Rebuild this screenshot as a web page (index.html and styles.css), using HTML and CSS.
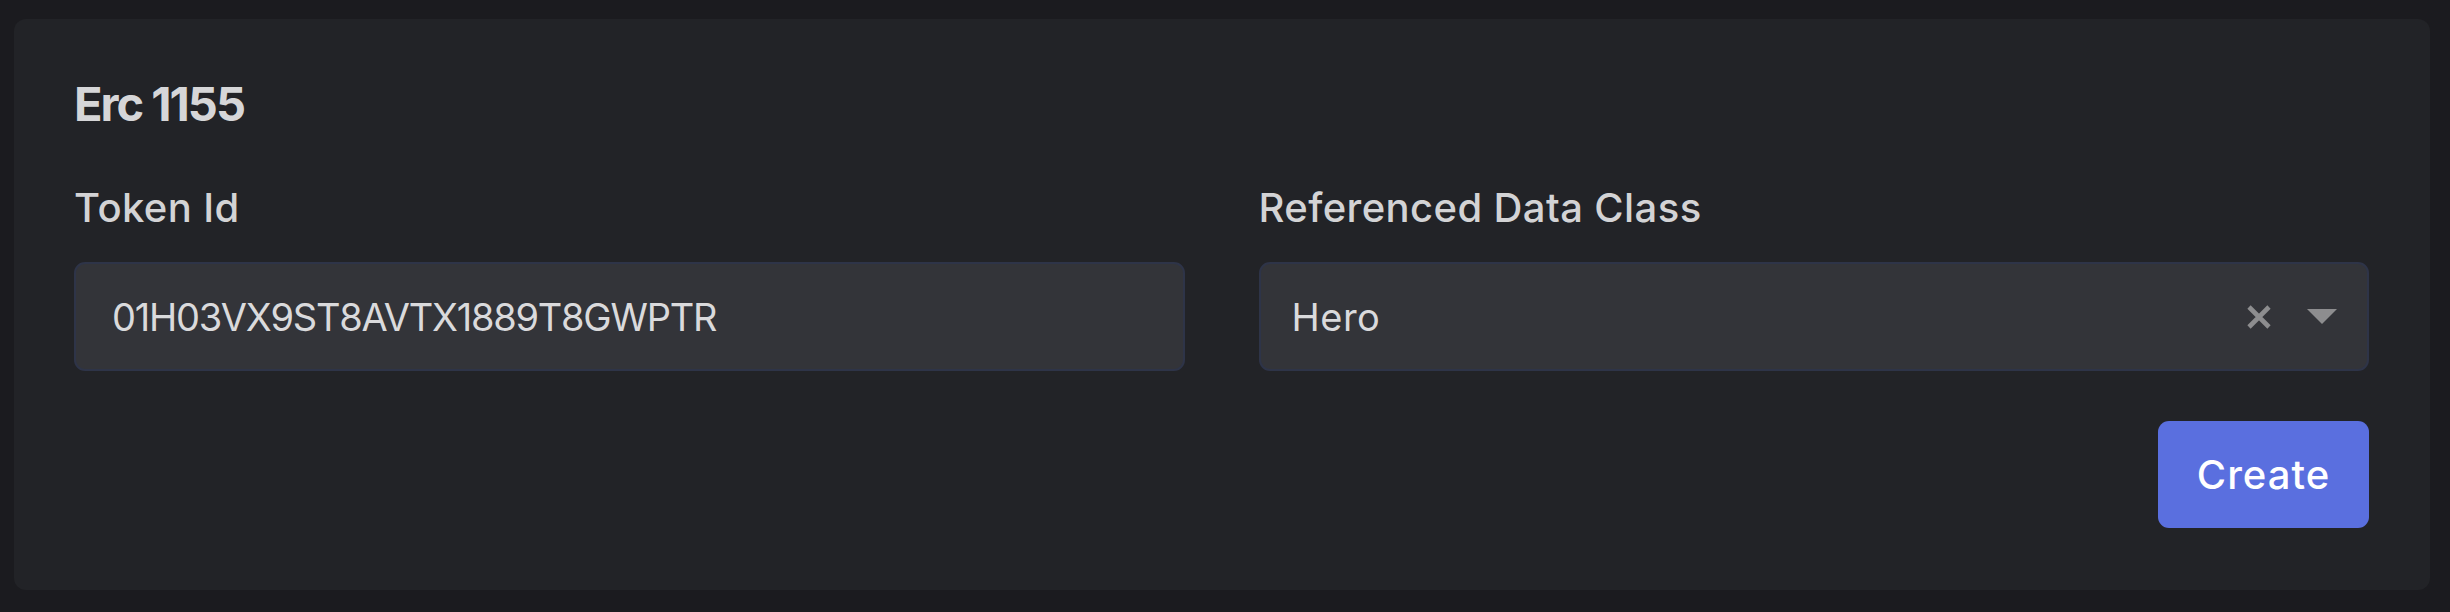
FILE: index.html
```html
<!DOCTYPE html>
<html lang="en">
<head>
<meta charset="utf-8">
<title>Erc 1155</title>
<link rel="stylesheet" href="styles.css">
</head>
<body>
<div class="card">
  <h3 class="title">Erc 1155</h3>
  <div class="fields">
    <div class="field">
      <label class="label">Token Id</label>
      <div class="input">01H03VX9ST8AVTX1889T8GWPTR</div>
    </div>
    <div class="field">
      <label class="label">Referenced Data Class</label>
      <div class="select">
        <span class="select-value">Hero</span>
        <span class="select-icons">
          <svg class="icon-clear" width="26" height="24" viewBox="0 0 26 24" aria-hidden="true">
            <path d="M3 2 L23 22 M23 2 L3 22" stroke="#8d8d8f" stroke-width="4.6" fill="none"/>
          </svg>
          <svg class="icon-caret" width="30" height="15" viewBox="0 0 30 15" aria-hidden="true">
            <path d="M0 0 H30 L15 15 Z" fill="#8d8d8f"/>
          </svg>
        </span>
      </div>
    </div>
  </div>
  <div class="actions">
    <button class="btn">Create</button>
  </div>
</div>
</body>
</html>
```

FILE: styles.css
```css
html, body {
  margin: 0;
  background: #1b1b1f;
}
body {
  padding: 19px 20px 22px 14px;
  font-family: "Inter", "Noto Sans", sans-serif;
  color: #d5d5d7;
}
.card {
  background: #222327;
  border-radius: 12px;
  padding: 61px 61px 62px 60px;
}
.title {
  margin: 0;
  font-size: 47px;
  line-height: 48px;
  font-weight: 700;
  letter-spacing: -2px;
  color: #d6d6d8;
}
.fields {
  margin-top: 56px;
  display: grid;
  grid-template-columns: 1fr 1fr;
  column-gap: 74px;
}
.field {
  display: flex;
  flex-direction: column;
}
.label {
  font-size: 40px;
  line-height: 48px;
  font-weight: 500;
  letter-spacing: 0.4px;
  color: #d3d3d5;
  margin-bottom: 30px;
}
.input, .select {
  box-sizing: border-box;
  height: 109px;
  background: #333439;
  border: 2px solid #2e3448;
  border-radius: 11px;
  display: flex;
  align-items: center;
  font-size: 38px;
  line-height: 48px;
  color: #dadadc;
}
.input {
  padding: 0 36px;
  letter-spacing: -1.25px;
}
.select {
  padding: 0 30px 0 31px;
  justify-content: space-between;
}
.select-value {
  letter-spacing: 0.5px;
}
.select-icons {
  display: flex;
  align-items: center;
  gap: 35px;
}
.icon-clear, .icon-caret {
  display: block;
}
.actions {
  margin-top: 50px;
  display: flex;
  justify-content: flex-end;
}
.btn {
  width: 211px;
  height: 107px;
  border: none;
  border-radius: 11px;
  background: #5a6fdf;
  color: #ffffff;
  font-family: "Inter", "Noto Sans", sans-serif;
  font-size: 40px;
  font-weight: 500;
  letter-spacing: 1px;
  padding: 0;
}
```
